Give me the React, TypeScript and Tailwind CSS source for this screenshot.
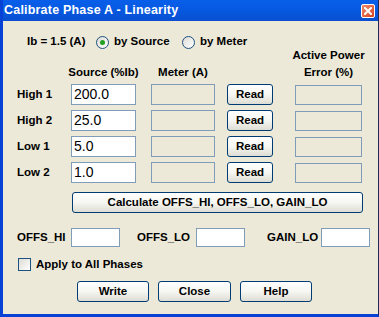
import React from "react";

const rows = [
  { label: "High 1", source: "200.0" },
  { label: "High 2", source: "25.0" },
  { label: "Low 1", source: "5.0" },
  { label: "Low 2", source: "1.0" },
];

function XpButton({ label, className }: { label: string; className?: string }) {
  return (
    <button
      className={
        "flex h-[21px] items-center justify-center whitespace-nowrap rounded-[3px] border border-[#003C74] bg-gradient-to-b from-white via-[#F6F6F2] to-[#DEDDD4] text-[11.5px] font-bold text-black " +
        (className ?? "")
      }
    >
      {label}
    </button>
  );
}

function Field({ disabled, value, className }: { disabled?: boolean; value?: string; className?: string }) {
  return (
    <div
      className={
        "flex items-center border border-[#7F9DB9] pl-[2px] text-[14px] font-normal text-black " +
        (disabled ? "bg-[#ECE9D8] " : "bg-white ") +
        (className ?? "")
      }
    >
      {value}
    </div>
  );
}

function Radio({ checked }: { checked?: boolean }) {
  return (
    <span className="flex h-[13px] w-[13px] items-center justify-center rounded-full border border-[#1C5180] bg-gradient-to-br from-[#DCDBD5] to-white">
      {checked && <span className="h-[5px] w-[5px] rounded-full bg-[#21A121]" />}
    </span>
  );
}

export default function App() {
  return (
    <div
      className="flex h-[317px] w-[379px] flex-col overflow-hidden border-b-[3px] border-l-[3px] border-r border-b-[#0841D6] border-l-[#0841D6] border-r-[#1F2A50] bg-[#ECE9D8] text-black"
      style={{ fontFamily: '"Liberation Sans", Arial, sans-serif' }}
    >
      {/* title bar */}
      <div className="-ml-[3px] flex h-[21px] shrink-0 items-center justify-between bg-gradient-to-b from-[#0A5FEA] via-[#0558E0] to-[#0A4FD0] pl-[4px] pr-[3px]">
        <span className="text-[12.5px] font-bold tracking-[0.2px] text-white">Calibrate Phase A - Linearity</span>
        <span className="flex h-[14px] w-[14px] items-center justify-center rounded-[2px] border border-white bg-gradient-to-br from-[#F08A6C] to-[#D4401C]">
          <svg width="8" height="8" viewBox="0 0 8 8">
            <path d="M1 1 L7 7 M7 1 L1 7" stroke="white" strokeWidth="2" strokeLinecap="square" />
          </svg>
        </span>
      </div>

      <div className="flex flex-col whitespace-nowrap pl-[14px] text-[11.5px] font-bold">
        {/* Ib row */}
        <div className="mt-[13px] flex h-[16px] items-center">
          <span className="ml-[10px] w-[69px]">Ib = 1.5 (A)</span>
          <Radio checked />
          <span className="ml-[5px] w-[68px]">by Source</span>
          <Radio />
          <span className="ml-[5px]">by Meter</span>
        </div>

        {/* header */}
        <div className="-mt-[3px] grid grid-cols-[54px_80px_76px_68px_67px] leading-[17px]">
          <span />
          <span />
          <span />
          <span />
          <span className="flex justify-center">Active Power</span>
          <span />
          <span className="flex w-[65px] justify-center">Source (%Ib)</span>
          <span className="flex w-[64px] justify-center">Meter (A)</span>
          <span />
          <span className="flex justify-center">Error (%)</span>
        </div>

        {/* rows */}
        <div className="mt-[3px] flex flex-col gap-[5px]">
          {rows.map((r) => (
            <div key={r.label} className="grid h-[21px] grid-cols-[54px_80px_76px_68px_67px] items-center">
              <span>{r.label}</span>
              <Field value={r.source} className="h-[21px] w-[65px]" />
              <Field disabled className="h-[21px] w-[64px]" />
              <XpButton label="Read" className="w-[46px]" />
              <Field disabled className="h-[20px] w-[67px]" />
            </div>
          ))}
        </div>

        <XpButton label="Calculate OFFS_HI, OFFS_LO, GAIN_LO" className="ml-[55px] mt-[9px] w-[291px]" />

        {/* results */}
        <div className="mt-[15px] flex h-[19px] items-center">
          <span className="w-[54px]">OFFS_HI</span>
          <Field className="h-[19px] w-[49px]" />
          <span className="ml-[17px] w-[59px]">OFFS_LO</span>
          <Field className="h-[19px] w-[49px]" />
          <span className="ml-[22px] w-[54px]">GAIN_LO</span>
          <Field className="h-[19px] w-[49px]" />
        </div>

        <div className="mt-[11px] flex h-[13px] items-center">
          <span className="ml-[1px] h-[13px] w-[13px] border border-[#1C5180] bg-gradient-to-br from-[#DCDBD5] to-white" />
          <span className="ml-[5px]">Apply to All Phases</span>
        </div>

        <div className="ml-[60px] mt-[10px] flex gap-[9px]">
          <XpButton label="Write" className="w-[72px]" />
          <XpButton label="Close" className="w-[73px]" />
          <XpButton label="Help" className="w-[72px]" />
        </div>
      </div>
    </div>
  );
}
